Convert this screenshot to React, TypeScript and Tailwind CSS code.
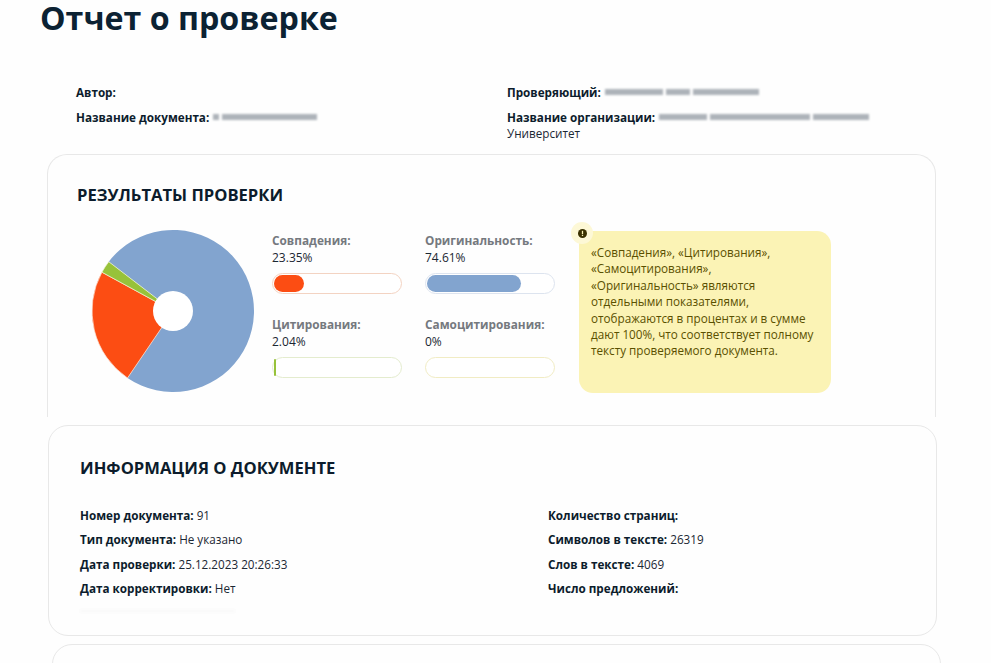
import React from 'react';

const Redacted: React.FC<{ widths: number[] }> = ({ widths }) => (
  <span className="ml-[4px] inline-flex items-center gap-[3px] align-middle blur-[1.2px]">
    {widths.map((w, i) => (
      <span key={i} className="h-[6px] bg-[#adb3b9]" style={{ width: w }} />
    ))}
  </span>
);

const Field: React.FC<{ label: string; value?: string; className?: string }> = ({ label, value, className }) => (
  <div className={`text-[11.7px] leading-[16px] text-[#1b2733] ${className ?? ''}`}>
    <b className="font-bold text-[#0c1c2c]">{label}</b>
    {value ? ` ${value}` : ''}
  </div>
);

const Metric: React.FC<{
  label: string;
  value: string;
  fillWidth: number;
  fillClass: string;
  borderClass: string;
}> = ({ label, value, fillWidth, fillClass, borderClass }) => (
  <div className="w-[130px]">
    <div className="text-[11.8px] leading-[16px] font-bold text-[#75797e]">{label}</div>
    <div className="mt-[2px] text-[12px] leading-[16px] text-[#1b2733]">{value}</div>
    <div className={`mt-[7px] h-[21px] rounded-full border bg-white p-[1px] ${borderClass}`}>
      <div className={`h-full rounded-full ${fillClass}`} style={{ width: fillWidth }} />
    </div>
  </div>
);

export default function App() {
  return (
    <div className="h-[663px] w-[991px] overflow-hidden bg-[#fefefe] font-['Open_Sans',sans-serif]">
      <h1 className="ml-[40px] h-[38px] pb-[2px] text-[32.2px] leading-[36px] font-bold text-[#0c2233]">Отчет о проверке</h1>

      {/* Шапка отчета */}
      <div className="mt-[46px] ml-[76px] grid grid-cols-[431px_1fr]">
        <div>
          <Field label="Автор:" />
          <div className="mt-[9px] flex items-center">
            <Field label="Название документа:" />
            <Redacted widths={[6, 95]} />
          </div>
        </div>
        <div>
          <div className="flex items-center">
            <Field label="Проверяющий:" />
            <Redacted widths={[58, 24, 66]} />
          </div>
          <div className="mt-[9px] flex items-center">
            <Field label="Название организации:" />
            <Redacted widths={[48, 100, 56]} />
          </div>
          <div className="text-[11.7px] leading-[16px] text-[#1b2733]">Университет</div>
        </div>
      </div>

      {/* Результаты проверки */}
      <section className="mt-[13px] ml-[47px] h-[263px] w-[889px] rounded-t-[20px] border border-b-0 border-[#e8e8e8] pt-[30px] pl-[29px]">
        <h2 className="text-[16.6px] leading-[20px] font-bold text-[#0c1c2c]">РЕЗУЛЬТАТЫ ПРОВЕРКИ</h2>
        <div className="mt-[15px] flex">
          <svg className="mt-[9px] ml-[14px] h-[164px] w-[164px] shrink-0" viewBox="0 0 164 164">
            <path d="M82 82 L17.74 32.69 A81 81 0 1 1 36.5 149 Z" fill="#82a4cf" />
            <path d="M82 82 L36.5 149 A81 81 0 0 1 10.9 43.2 Z" fill="#fc4d13" stroke="#fbe3d4" strokeWidth="0.7" />
            <path d="M82 82 L10.9 43.2 A81 81 0 0 1 17.74 32.69 Z" fill="#97c23a" stroke="#f2f5d8" strokeWidth="0.7" />
            <circle cx="82" cy="82" r="20" fill="#fff" />
          </svg>
          <div className="mt-[12px] ml-[17px] grid w-[283px] shrink-0 grid-cols-[130px_130px] gap-x-[23px] gap-y-[22px] self-start">
            <Metric label="Совпадения:" value="23.35%" fillWidth={30} fillClass="bg-[#fc4d13]" borderClass="border-[#f3d3c2]" />
            <Metric label="Оригинальность:" value="74.61%" fillWidth={94} fillClass="bg-[#82a4cf]" borderClass="border-[#dde4ef]" />
            <Metric label="Цитирования:" value="2.04%" fillWidth={2} fillClass="bg-[#97c23a]" borderClass="border-[#e4ecce]" />
            <Metric label="Самоцитирования:" value="0%" fillWidth={0} fillClass="bg-[#97c23a]" borderClass="border-[#f1ecc4]" />
          </div>
          <div className="relative mt-[11px] ml-[24px] h-[162px] w-[252px] shrink-0 rounded-[14px] bg-[#fbf3b5] pt-[13px] pl-[12px] text-[11.7px] leading-[16.4px] text-[#5a5000]">
            <span className="absolute -top-[9px] -left-[8px] flex h-[22px] w-[22px] items-center justify-center rounded-full bg-[#fdf8d6]">
              <svg className="h-[9px] w-[9px]" viewBox="0 0 10 10">
                <circle cx="5" cy="5" r="5" fill="#3a3000" />
                <rect x="4.3" y="2" width="1.4" height="3.6" fill="#fbf3b5" />
                <rect x="4.3" y="6.4" width="1.4" height="1.4" fill="#fbf3b5" />
              </svg>
            </span>
            «Совпадения», «Цитирования»,
            <br />
            «Самоцитирования»,
            <br />
            «Оригинальность» являются
            <br />
            отдельными показателями,
            <br />
            отображаются в процентах и в сумме
            <br />
            дают 100%, что соответствует полному
            <br />
            тексту проверяемого документа.
          </div>
        </div>
      </section>

      {/* Информация о документе */}
      <section className="mt-[8px] ml-[48px] h-[211px] w-[889px] rounded-[20px] border border-[#e8e8e8] pt-[32px] pl-[31px]">
        <h2 className="text-[16.6px] leading-[20px] font-bold text-[#0c1c2c]">ИНФОРМАЦИЯ О ДОКУМЕНТЕ</h2>
        <div className="mt-[29px] grid grid-cols-[468px_1fr]">
          <div className="flex flex-col gap-[8.3px]">
            <Field label="Номер документа:" value="91" />
            <Field label="Тип документа:" value="Не указано" />
            <Field label="Дата проверки:" value="25.12.2023 20:26:33" />
            <Field label="Дата корректировки:" value="Нет" />
            <div className="mt-[5px] h-[4px] w-[155px] bg-[#fafafa] blur-[1px]" />
          </div>
          <div className="flex flex-col gap-[8.3px]">
            <Field label="Количество страниц:" />
            <Field label="Символов в тексте:" value="26319" />
            <Field label="Слов в тексте:" value="4069" />
            <Field label="Число предложений:" />
          </div>
        </div>
      </section>

      {/* Следующая карточка, уходит за край экрана */}
      <section className="mt-[8px] ml-[52px] h-[100px] w-[889px] rounded-[20px] border border-[#e8e8e8]" />
    </div>
  );
}
